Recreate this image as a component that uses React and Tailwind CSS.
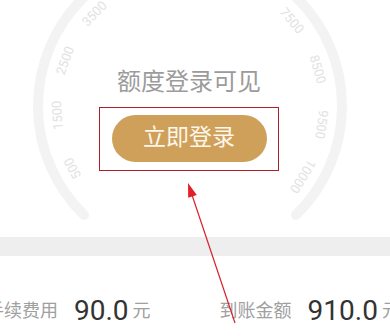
import React from 'react';

// Credit gauge with login prompt, plus the fee / amount row underneath.
// The gauge and the red annotation arrow are drawings (svg); everything else is flow.

const CX = 190;
const CY = 106;

// only the ticks that fall inside the visible part of the dial
const ticks = [0, 1, 2, 3, 7, 8, 9, 10].map((i) => ({
  label: i === 10 ? '10000' : String(500 + i * 1000),
  angle: 152 + i * 24,
}));

function Gauge() {
  return (
    <svg className="absolute left-0 top-0" width="390" height="237" viewBox="0 0 390 237">
      <path
        d="M 84 215 A 152 152 0 1 1 296 215"
        fill="none"
        stroke="#f3f3f3"
        strokeWidth="10"
        strokeLinecap="round"
      />
      {ticks.map((t) => {
        const rad = (t.angle * Math.PI) / 180;
        const x = CX + 133 * Math.cos(rad);
        const y = CY + 133 * Math.sin(rad);
        return (
          <text
            key={t.label}
            x={x}
            y={y}
            fill="#e2e2e2"
            fontSize="13"
            fontFamily="Roboto, 'Noto Sans', sans-serif"
            textAnchor="middle"
            dominantBaseline="central"
            transform={`rotate(${t.angle + 90} ${x} ${y})`}
          >
            {t.label}
          </text>
        );
      })}
    </svg>
  );
}

function Arrow() {
  return (
    <svg className="pointer-events-none absolute left-0 top-0" width="390" height="336" viewBox="0 0 390 336">
      <line x1="235" y1="323" x2="191" y2="192" stroke="#d8202b" strokeWidth="1.2" />
      <polygon points="188,183 188.2,197.7 196.8,194.9" fill="#e0202a" />
    </svg>
  );
}

function Stat({ label, value, unit }) {
  return (
    <div className="flex items-center whitespace-nowrap">
      <span className="text-[18px] leading-[24px] text-[#a0a0a0]">{label}</span>
      <span className="ml-[16px] text-[28px] leading-[34px] text-[#333333]">{value}</span>
      <span className="ml-[4px] text-[18px] leading-[24px] text-[#a0a0a0]">{unit}</span>
    </div>
  );
}

export default function App() {
  return (
    <div
      className="relative h-[336px] w-[390px] overflow-hidden bg-white"
      style={{ fontFamily: "Roboto, 'Noto Sans', 'Noto Sans CJK SC', sans-serif" }}
    >
      {/* Gauge + login prompt */}
      <div className="relative h-[237px]">
        <Gauge />
        <div className="relative flex flex-col items-center pr-[12px] pt-[67px]">
          <p className="text-[24px] leading-[30px] text-[#9b9b9b]">额度登录可见</p>
          <div className="mt-[10px] border-[1.5px] border-solid border-[#b01e2c] px-[11.5px] pb-[8.5px] pt-[6.5px]">
            <button
              type="button"
              className="flex h-[47px] w-[155px] items-center justify-center rounded-full bg-[#cfa05a] text-[23px] text-[#fdf6ea]"
            >
              立即登录
            </button>
          </div>
        </div>
      </div>

      {/* Divider strip */}
      <div className="h-[19px] bg-[#eeeeee]" />

      {/* Fee row */}
      <div className="flex items-center pt-[32px] -ml-[14px]">
        <Stat label="手续费用" value="90.0" unit="元" />
        <div className="ml-[40px] mr-[29px] mt-[10px] h-[35px] w-px bg-[#e2e2e2]" />
        <Stat label="到账金额" value="910.0" unit="元" />
      </div>
      <div className="-mt-[3px] flex text-[28px] leading-[34px] text-[#f3f3f3]">
        <span className="ml-[75px]">90.0</span>
        <span className="ml-[180px]">910.0</span>
      </div>

      <Arrow />
    </div>
  );
}
